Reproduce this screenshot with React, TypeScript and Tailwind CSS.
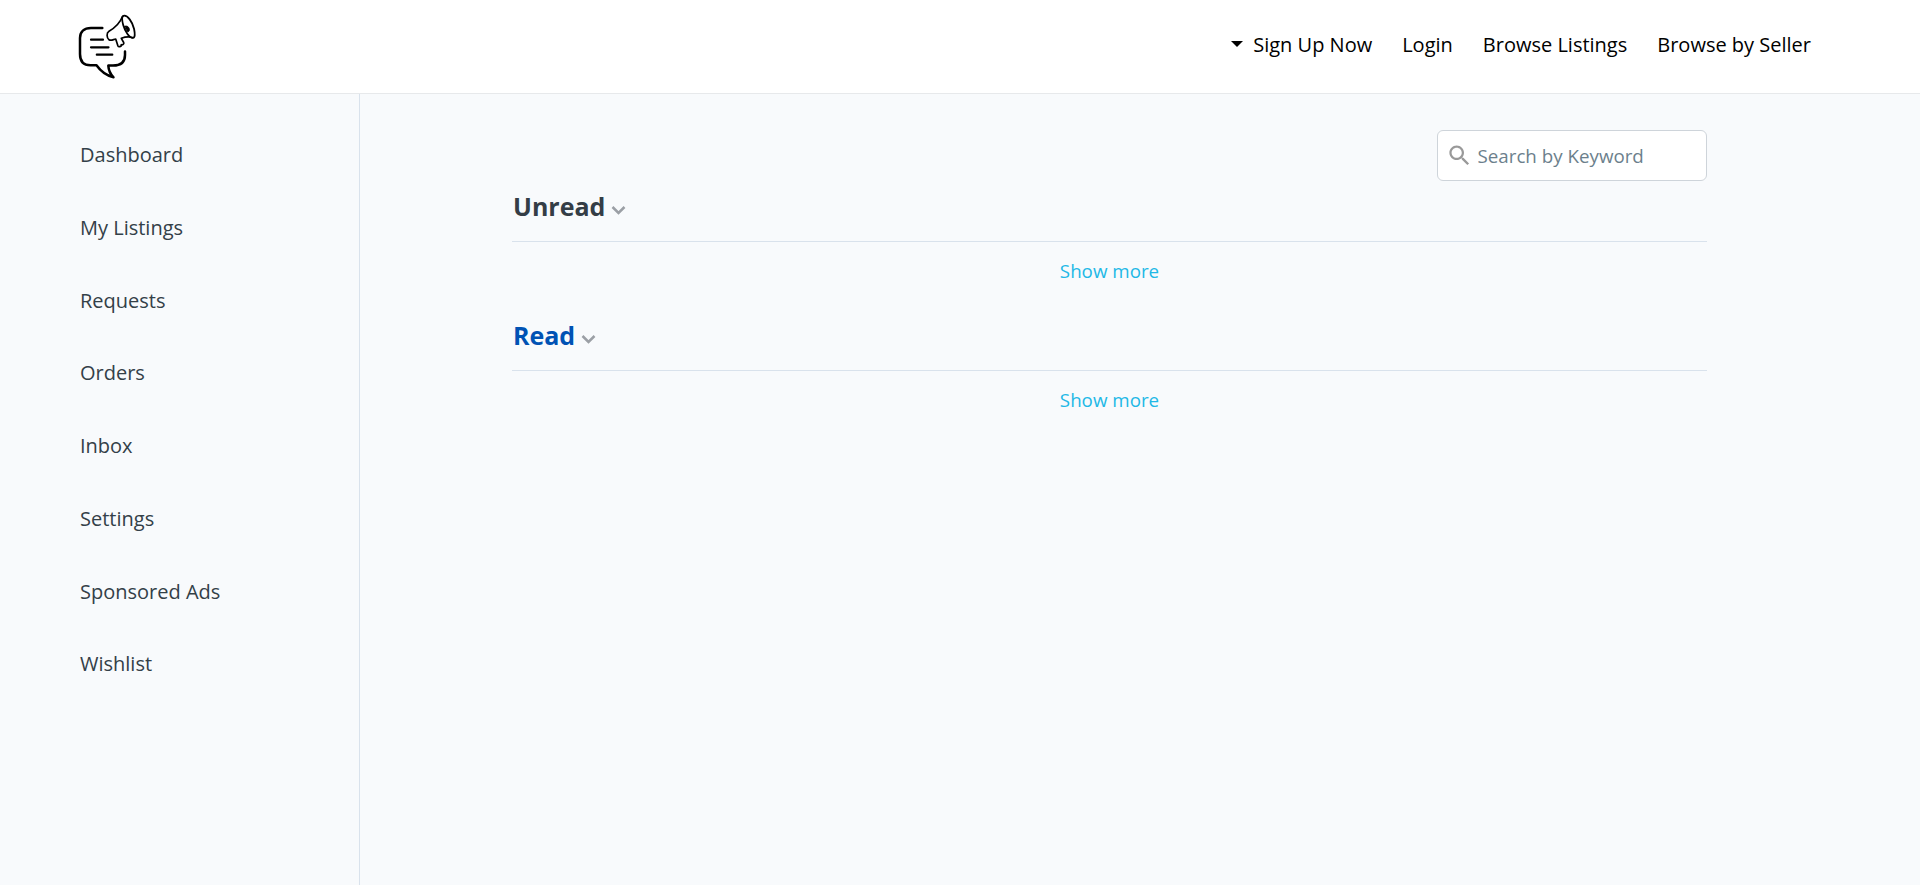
const menu = ["Dashboard", "My Listings", "Requests", "Orders", "Inbox", "Settings", "Sponsored Ads", "Wishlist"];

function Logo() {
  return (
    <svg className="h-[70px] w-[60px]" viewBox="78 12 60 70" fill="none" stroke="#000" strokeLinecap="round" strokeLinejoin="round">
      <path strokeWidth="2.5" d="M102.3 28H91C84 28 80 32 80 38V54C80 61.500 84 65.300 90.500 65.300H96.500C100.500 71 106 75.500 113.500 77.300C110.500 74.300 108.600 70 108.300 65.600H113C121 65.600 125 61.500 125 55V51.500" />
      <path strokeWidth="2.2" d="M91 39.700H103M91 47.300H108.500M96.800 54.700H112.300" />
      <path strokeWidth="1.7" d="M122.600 16.300C120 23 115 27.800 109 31.300C106.200 33 106.700 38 109 39.700C111 41.200 113.500 39.300 115.700 39L117.800 45.600C118.500 47.300 121.500 47 121.300 44.700C122.500 45.300 124.300 44 123.700 42.500L121.300 38.300C125.500 36.800 129 36.500 132.500 37.600" />
      <path strokeWidth="1.8" d="M123.500 15.800C127.500 14.800 132.500 22 134.100 29C135.100 34 135.100 37.700 133 37.900C129.500 38 125 31.500 123.200 25C122 20.500 122 16.300 123.500 15.800Z" />
      <path fill="#000" strokeWidth="0.9" d="M124.700 26.300C127 25.300 129.500 27 129.300 30C129.200 31.700 128 32.200 127.300 31.400Z" />
    </svg>
  );
}

function Section({ title, color }: { title: string; color: string }) {
  return (
    <section className="h-[129px]">
      <div className="flex h-[53px] items-start border-b border-[#d9e2ec] pl-px">
        <h2 className={`text-[25px] leading-[34px] font-bold ${color}`}>{title}</h2>
        <svg className="mt-[16px] ml-[6px] h-[11px] w-[15px]" viewBox="0 0 15 11" fill="none" stroke="#9b9fa5" strokeWidth="2.5">
          <path d="M1.500 2L7.500 8L13.500 2" />
        </svg>
      </div>
      <div className="pt-[14px] text-center text-[18.75px] leading-[30px]">
        <a href="#" className="text-[#22b8e6]">Show more</a>
      </div>
    </section>
  );
}

export default function App() {
  return (
    <div className="flex h-[885px] flex-col overflow-hidden bg-[#f8fafc] font-['Open_Sans',sans-serif] text-[20px]">
      <header className="flex h-[94px] shrink-0 justify-between border-b border-[#e7e9eb] bg-white pt-[12px] pr-[109px] pl-[78px]">
        <Logo />
        <nav className="flex h-[30px] gap-[30px] pt-[18px] leading-[30px] whitespace-nowrap text-black">
          <a href="#" className="flex">
            <svg className="mt-[11px] mr-[10px] h-[6px] w-[12px]" viewBox="0 0 12 6">
              <path d="M0 0H12L6 6Z" />
            </svg>
            Sign Up Now
          </a>
          <a href="#">Login</a>
          <a href="#">Browse Listings</a>
          <a href="#">Browse by Seller</a>
        </nav>
      </header>
      <div className="flex min-h-0 grow">
        <aside className="w-[360px] shrink-0 border-r border-[#d9e2ec] pt-[46px] pl-[80px]">
          <nav className="flex flex-col text-[#334048]">
            {menu.map((item) => (
              <a key={item} href="#" className="h-[72.75px] leading-[30px]">{item}</a>
            ))}
          </nav>
        </aside>
        <main className="flex w-[1347px] flex-col pt-[36px] pl-[152px]">
          <label className="flex h-[51px] w-[270px] items-center self-end rounded-[6px] border border-[#ced4da] bg-white pl-[8px]">
            <svg className="h-[27px] w-[27px] shrink-0" viewBox="0 0 24 24" fill="#999">
              <path d="M15.500 14h-.79l-.28-.27C15.410 12.590 16 11.110 16 9.500 16 5.910 13.090 3 9.500 3S3 5.910 3 9.500 5.910 16 9.500 16c1.610 0 3.090-.59 4.230-1.570l.27.28v.79l5 4.990L20.490 19l-4.990-5zm-6 0C7.010 14 5 11.990 5 9.500S7.010 5 9.500 5 14 7.010 14 9.500 11.990 14 9.500 14z" />
            </svg>
            <input placeholder="Search by Keyword" className="mt-[2px] ml-[4.5px] w-[200px] text-[18.75px] outline-none placeholder:text-[#6c7f8c]" />
          </label>
          <div className="pt-[8px]">
            <Section title="Unread" color="text-[#343d46]" />
            <Section title="Read" color="text-[#0052b4]" />
          </div>
        </main>
      </div>
    </div>
  );
}
